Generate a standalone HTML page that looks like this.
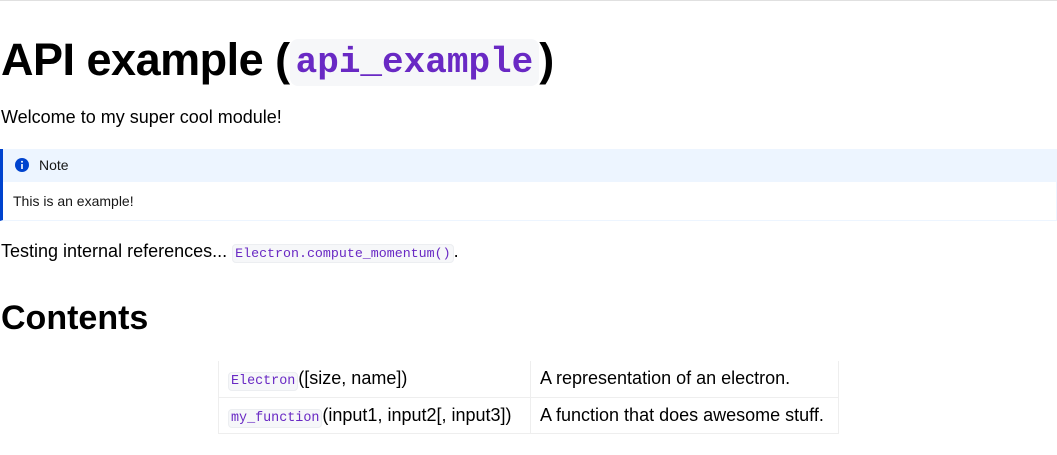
<!DOCTYPE html>
<html><head><style>
body{margin:0;width:1057px;height:455px;overflow:hidden;background:#fff;font-family:"Liberation Sans",sans-serif;color:#161616;border-top:1px solid #e0e0e0;box-sizing:border-box;position:relative}
.a{position:absolute;white-space:nowrap}
code{font-family:"Liberation Mono",monospace;color:#6929c4;background:#f6f7f9;border:1px solid #eceef1;border-radius:4px;padding:1px 2px}
h1{position:absolute;margin:0;left:1px;top:33px;font-size:45px;font-weight:bold;color:#000;letter-spacing:-0.5px;white-space:nowrap}
h1 code{font-size:36px;font-weight:bold;border:none;padding:3px 6px;border-radius:8px;letter-spacing:0;vertical-align:3px}
</style></head><body>
<h1>API example (<code>api_example</code>)</h1>
<div class="a" style="left:1px;top:106px;font-size:18px;color:#000">Welcome to my super cool module!</div>
<div class="a" style="left:0;top:148px;width:1057px;height:72px;box-sizing:border-box;border-left:3px solid #0043ce;border-right:1px solid #edf5ff;border-bottom:1px solid #edf5ff">
 <div style="height:33px;background:#edf5ff;position:relative">
  <svg style="position:absolute;left:11px;top:8px" width="16" height="16" viewBox="0 0 16 16"><circle cx="8" cy="8" r="7" fill="#0043ce"/><rect x="7.2" y="7" width="1.6" height="5" fill="#fff"/><circle cx="8" cy="4.8" r="1" fill="#fff"/></svg>
  <span class="a" style="left:36px;top:8px;font-size:14px">Note</span>
 </div>
 <span class="a" style="left:10px;top:44px;font-size:14px">This is an example!</span>
</div>
<div class="a" style="left:1px;top:240px;font-size:18px;color:#000">Testing internal references... <code style="font-size:13.3px">Electron.compute_momentum()</code>.</div>
<div class="a" style="left:1px;top:298px;font-size:34px;font-weight:bold;color:#000">Contents</div>
<table class="a" style="left:218px;top:360px;border-collapse:collapse;font-size:18px;color:#000">
<tr style="height:36px"><td style="width:302px;border:1px solid #eeeeee;border-top:none;padding:0 0 0 9px"><code style="font-size:13.4px">Electron</code>([size, name])</td><td style="width:298px;border:1px solid #eeeeee;border-top:none;padding:0 0 0 9px">A representation of an electron.</td></tr>
<tr style="height:36px"><td style="border:1px solid #eeeeee;padding:0 0 0 9px"><code style="font-size:13.4px">my_function</code>(input1, input2[, input3])</td><td style="border:1px solid #eeeeee;padding:0 0 0 9px">A function that does awesome stuff.</td></tr>
</table>
</body></html>
